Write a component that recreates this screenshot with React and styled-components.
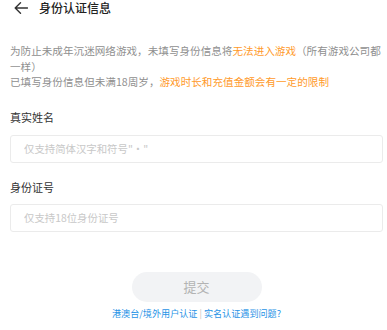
import React from "react";
import styled, { createGlobalStyle } from "styled-components";

const GlobalStyle = createGlobalStyle`
  html, body {
    margin: 0;
    padding: 0;
    background: #fff;
  }
  body {
    font-family: "Noto Sans CJK SC", "Noto Sans", sans-serif;
  }
`;

const Page = styled.div`
  width: 387px;
  height: 330px;
  box-sizing: border-box;
  padding: 0 4px 0 10px;
  display: flex;
  flex-direction: column;
  overflow: hidden;
`;

const Header = styled.div`
  height: 16px;
  display: flex;
  align-items: center;
  gap: 11px;
  padding-left: 4px;
  color: #222;
`;

const Title = styled.div`
  font-size: 12px;
  font-weight: 500;
  line-height: 16px;
`;

const Notice = styled.p`
  margin: 27px 0 0;
  font-size: 10.6px;
  line-height: 15.5px;
  color: #8f8f8f;
`;

const Warn = styled.span`
  color: #ff9a2a;
`;

const Label = styled.div`
  margin-top: ${(p) => p.$top}px;
  font-size: 11px;
  line-height: 16px;
  color: #333;
`;

const Input = styled.input`
  margin-top: ${(p) => p.$top}px;
  height: 28px;
  box-sizing: border-box;
  width: 100%;
  border: 1px solid #ebebeb;
  border-radius: 3px;
  padding: 0 13px;
  font-family: inherit;
  font-size: 10.4px;
  color: #333;
  outline: none;
  &::placeholder {
    color: #c8c8c8;
  }
`;

const Submit = styled.button`
  align-self: center;
  margin-top: 40px;
  width: 130px;
  height: 30px;
  border: none;
  border-radius: 15px;
  background: #f2f3f5;
  color: #b3b3b3;
  font-family: inherit;
  font-size: 13px;
`;

const Links = styled.div`
  margin-top: 4px;
  text-align: center;
  font-size: 9.1px;
  line-height: 14px;
  color: #1f93e6;
`;

const Sep = styled.span`
  color: #c4c4c4;
  margin: 0 2px;
`;

const BackArrow = () => (
  <svg width="14" height="12" viewBox="0 0 14 12" fill="none">
    <path
      d="M13.5 6H1.2M6.5 0.8L1.2 6L6.5 11.2"
      stroke="#333"
      strokeWidth="1.4"
      strokeLinecap="round"
      strokeLinejoin="round"
    />
  </svg>
);

export default function App() {
  return (
    <>
      <GlobalStyle />
      <Page>
        <Header>
          <BackArrow />
          <Title>身份认证信息</Title>
        </Header>
        <Notice>
          为防止未成年沉迷网络游戏，未填写身份信息将<Warn>无法进入游戏</Warn>（所有游戏公司都一样）
          <br />
          已填写身份信息但未满18周岁，<Warn>游戏时长和充值金额会有一定的限制</Warn>
        </Notice>
        <Label $top={19}>真实姓名</Label>
        <Input $top={10} placeholder={'仅支持简体汉字和符号"·"'} />
        <Label $top={16}>身份证号</Label>
        <Input $top={9} placeholder="仅支持18位身份证号" />
        <Submit>提交</Submit>
        <Links>
          港澳台/境外用户认证<Sep>|</Sep>实名认证遇到问题?
        </Links>
      </Page>
    </>
  );
}
